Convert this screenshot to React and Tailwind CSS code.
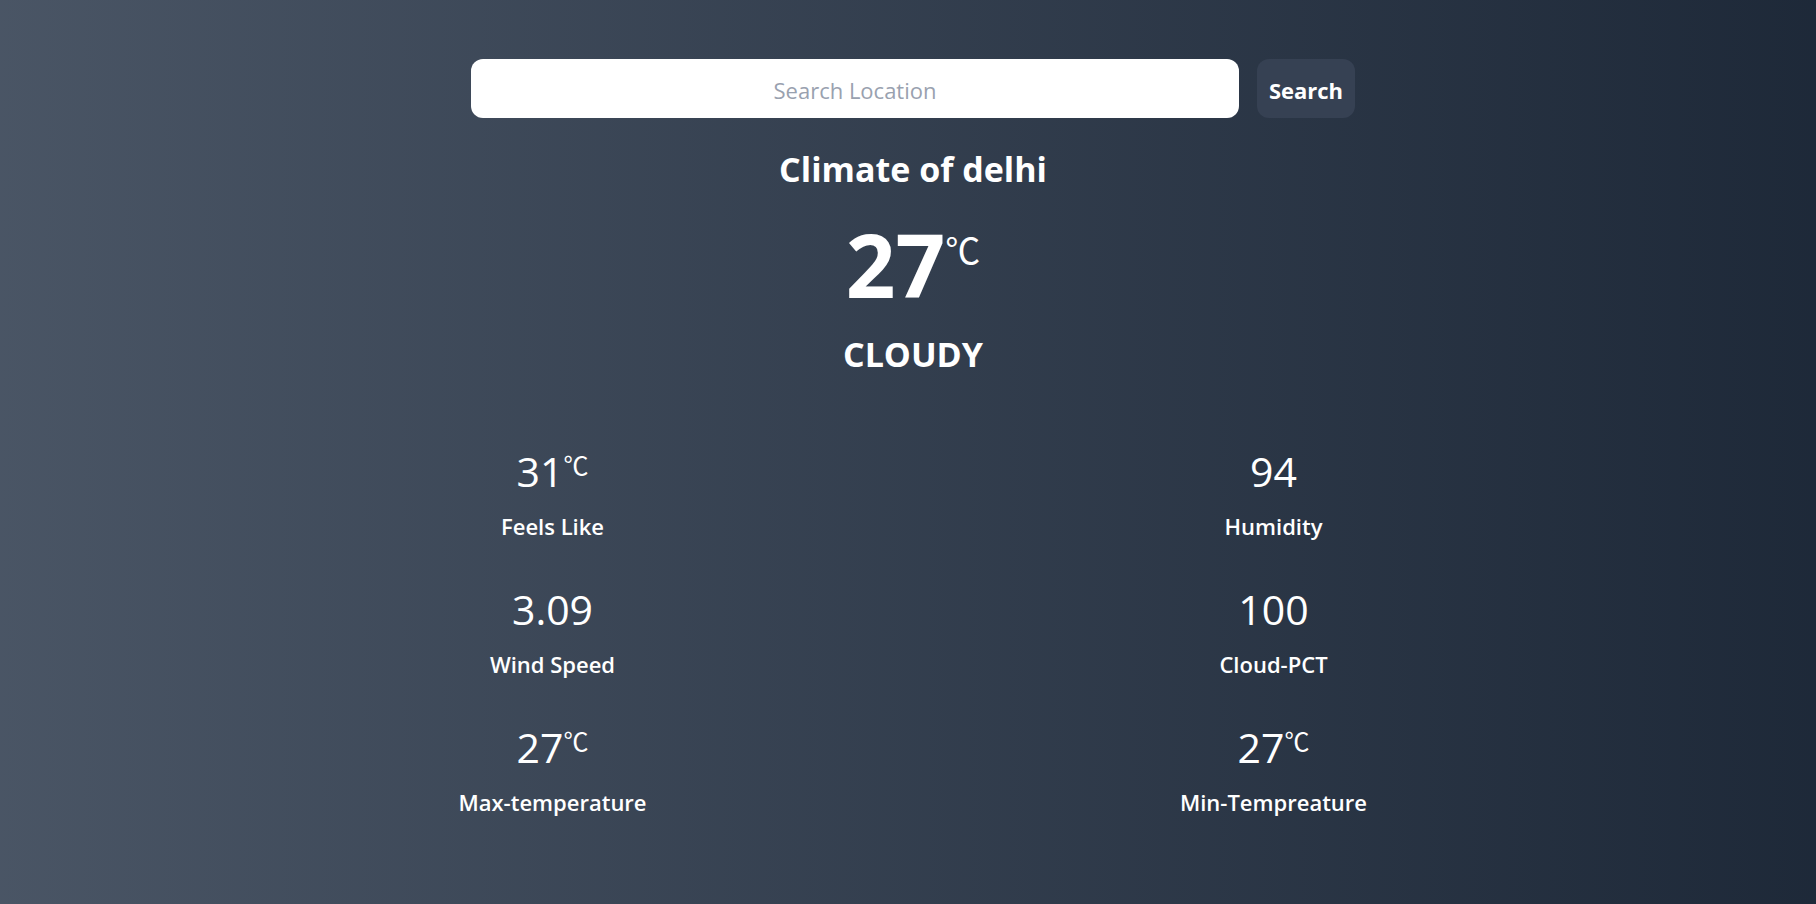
import { useState } from 'react';

const stats = [
  { value: '31', unit: true, label: 'Feels Like' },
  { value: '94', unit: false, label: 'Humidity' },
  { value: '3.09', unit: false, label: 'Wind Speed' },
  { value: '100', unit: false, label: 'Cloud-PCT' },
  { value: '27', unit: true, label: 'Max-temperature' },
  { value: '27', unit: true, label: 'Min-Tempreature' },
];

const fontStack = { fontFamily: '"Open Sans", "Noto Sans CJK SC", sans-serif' };

const Stat = ({ value, unit, label }) => (
  <div className="flex flex-col items-center">
    <div className="flex items-start">
      <span className="text-[41px] leading-none">{value}</span>
      {unit && <span className="text-[25px] leading-none mt-[2px]">℃</span>}
    </div>
    <p className="mt-[20px] text-[22px] leading-7 font-semibold">{label}</p>
  </div>
);

const App = () => {
  const [query, setQuery] = useState('');

  return (
    <div
      className="min-h-screen bg-gradient-to-r from-gray-600 to-gray-800 text-white"
      style={fontStack}
    >
      <div className="flex flex-col items-center pt-[59px] pl-[10px]">
        <div className="flex gap-[18px]">
          <input
            value={query}
            onChange={(e) => setQuery(e.target.value)}
            placeholder="Search Location"
            className="w-[768px] h-[59px] pt-[3px] rounded-xl bg-white text-gray-800 text-[22px] text-center outline-none placeholder:text-gray-400"
          />
          <button className="h-[59px] w-[98px] pt-[3px] rounded-xl bg-gray-700 text-[22px] font-bold">
            Search
          </button>
        </div>

        <h1 className="mt-[33px] text-[34px] leading-9 font-bold">Climate of delhi</h1>

        <div className="mt-[34px] flex items-start">
          <span className="text-[87px] leading-none font-bold">27</span>
          <span className="text-[35px] leading-none mt-[12px]">℃</span>
        </div>

        <h2 className="mt-[26px] text-[34px] leading-10 font-bold">CLOUDY</h2>

        <div className="mt-[77px] grid grid-cols-2 w-[1442px] gap-y-[49px]">
          {stats.map((s) => (
            <Stat key={s.label} {...s} />
          ))}
        </div>
      </div>
    </div>
  );
};

export default App;
